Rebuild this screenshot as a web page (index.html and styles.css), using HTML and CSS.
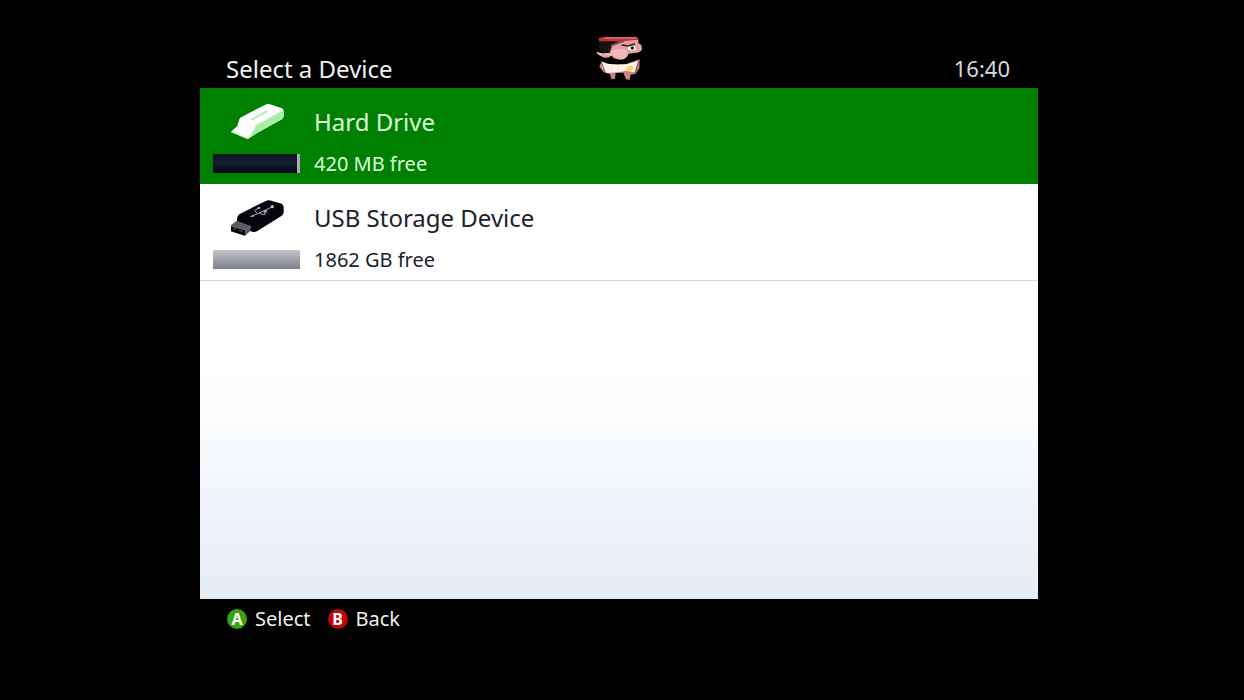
FILE: index.html
```
<!DOCTYPE html>
<html lang="en">
<head>
    <meta charset="UTF-8">
    <meta name="viewport" content="width=device-width, initial-scale=1.0">
    <title>Select a Device</title>
    <link rel="stylesheet" href="styles.css">
</head>
<body>

    <div class="screen">
        <!-- Title bar -->
        <header class="header">
            <h1>Select a Device</h1>
            <svg class="avatar" viewBox="9 6 144 144" aria-hidden="true">
                <!-- Face -->
                <path d="M20 24 L90 22 L136 17 L136 31 Q148 34 147 50 Q142 59 124 60 L107 62 Q103 73 93 79 Q78 82 63 76 L55 68 Q48 75 35 74 Q19 71 10 58 L21 60 L30 63 L50 59 L52 40 Z" fill="#e7a0a3"/>
                <path d="M55 58 Q62 48 72 51 Q86 43 100 52 L105 64 Q98 76 85 77 Q66 76 55 64 Z" fill="#f3b8b7"/>
                <path d="M12 59 Q22 64 33 63 Q48 61 54 67" fill="none" stroke="#ffc5c7" stroke-width="4"/>
                <path d="M102 39 Q112 33 125 40 L130 49 Q120 57 106 50 Z" fill="#fff4ed"/>
                <circle cx="118" cy="45" r="5" fill="#1a1011"/>
                <path d="M86 36 L105 39 L126 32" fill="none" stroke="#33191d" stroke-width="5"/>
                <!-- Bandana and eye patch -->
                <path d="M16 16 Q28 9 58 12 L133 11 L136 20 L96 24 L66 31 L20 28 Z" fill="#b63435"/>
                <path d="M34 15 L130 15" stroke="#df716c" stroke-width="4"/>
                <path d="M20 25 L64 25 L78 26 L57 39 L51 56 Q34 64 22 57 L18 42 Z" fill="#151216"/>
                <path d="M53 38 L93 24" stroke="#765055" stroke-width="5"/>
                <!-- Jaw and teeth -->
                <path d="M25 87 L47 94 L97 94 L140 79 L139 106 L128 122 L113 125 L110 141 L99 139 L91 119 L68 120 L66 137 L55 139 L51 123 L32 118 L19 101 Z" fill="#ce8084"/>
                <path d="M24 85 L44 92 L72 95 L101 94 L137 83 L124 118 L99 113 L80 117 L42 120 L28 105 Z" fill="#fff6eb"/>
                <path d="M101 102 L115 96 L122 105 L113 117 L99 112 Z" fill="#ffd36a"/>
                <path d="M35 92 L51 112 M57 94 L56 116 M77 96 L76 116" stroke="#ead4cd" stroke-width="2"/>
                <path d="M25 86 L35 116 M137 84 L127 120" stroke="#984850" stroke-width="3"/>
            </svg>
            <time class="clock">16:40</time>
        </header>

        <!-- Device list -->
        <main class="panel">
            <button type="button" class="device selected">
                <span class="device-art">
                    <svg class="device-icon" viewBox="14 6 168 120" aria-hidden="true">
                        <path d="M20 101 L39 84 L45 63 Q47 58 53 56 L126 19 Q134 16 141 20 L173 31 Q178 34 178 39 V56 Q176 62 170 65 L98 105 L71 123 Z" fill="#ffffff"/>
                        <path d="M177 35 V56 Q176 62 170 65 L98 105 L71 123 L90 94 Q93 80 102 77 Z" fill="#a8efa6"/>
                        <path d="M103 77 L176 36" stroke="#e7ffe4" stroke-width="3"/>
                        <path d="M78 63 L124 38 Q130 36 132 42 L88 66 Q80 69 78 63 Z" fill="#b9efb4"/>
                        <path d="M20 101 L71 123" stroke="#bff6b8" stroke-width="3"/>
                    </svg>
                    <span class="storage used"></span>
                </span>
                <span class="device-text">
                    <span class="device-name">Hard Drive</span>
                    <span class="device-free">420 MB free</span>
                </span>
            </button>

            <button type="button" class="device">
                <span class="device-art">
                    <svg class="device-icon" viewBox="14 6 168 120" aria-hidden="true">
                        <path d="M38 74 Q39 65 46 60 L124 21 Q132 17 141 20 L172 29 Q178 33 178 40 V56 Q177 62 171 66 L99 111 Q90 117 79 112 L38 94 Z" fill="#05060d"/>
                        <path d="M20 94 L37 80 L80 96 L77 112 L62 125 L20 112 Z" fill="#575a62"/>
                        <path d="M20 95 L62 108 L62 125 L20 112 Z" fill="#08090e"/>
                        <path d="M20 95 L62 108 L80 96" fill="none" stroke="#74777e" stroke-width="3"/>
                        <path d="M26 103 L36 106 M44 109 L55 112" stroke="#41444d" stroke-width="4"/>
                        <!-- USB mark -->
                        <path d="M84 66 L143 39 M99 59 L91 49 L103 42 M105 57 L120 63 L124 51" fill="none" stroke="#a3a7af" stroke-width="3"/>
                        <circle cx="144" cy="38" r="5" fill="#b9bcc3"/>
                        <path d="M76 69 L87 61 L89 68 Z" fill="#a3a7af"/>
                        <circle cx="104" cy="42" r="4" fill="#a3a7af"/>
                        <path d="M119 48 L129 49 L126 57 L117 55 Z" fill="#a3a7af"/>
                    </svg>
                    <span class="storage"></span>
                </span>
                <span class="device-text">
                    <span class="device-name">USB Storage Device</span>
                    <span class="device-free">1862 GB free</span>
                </span>
            </button>
        </main>

        <!-- Controller hints -->
        <footer class="footer">
            <button type="button" class="hint"><span class="key key-a">A</span>Select</button>
            <button type="button" class="hint"><span class="key key-b">B</span>Back</button>
        </footer>
    </div>

</body>
</html>
```

FILE: styles.css
```
/* General Styling */
* {
    box-sizing: border-box;
}

body {
    margin: 0;
    background: #000000;
    color: #f0f0f0;
    font-family: "Noto Sans", "Open Sans", sans-serif;
}

button {
    border: none;
    background: none;
    color: inherit;
    font-family: inherit;
    cursor: pointer;
}

.screen {
    min-height: 100vh;
    padding: 0 206px 0 200px;
    display: flex;
    flex-direction: column;
}

/* Title bar */
.header {
    height: 88px;
    padding: 0 28px 5px 26px;
    display: grid;
    grid-template-columns: 1fr 48px 1fr;
    align-items: end;
}

.header h1 {
    margin: 0;
    font-size: 24px;
    line-height: 28px;
    font-weight: normal;
}

.avatar {
    width: 48px;
    height: 48px;
    justify-self: start;
    margin-left: 2px;
}

.clock {
    font-size: 22px;
    line-height: 30px;
    text-align: right;
    color: #d8d8d8;
}

/* Device list */
.panel {
    flex: 1;
    background: linear-gradient(#ffffff 50%, #fbfdfe 64%, #f0f4fa 80%, #e6ecf3);
}

.device {
    width: 100%;
    height: 97px;
    padding: 12px 13px 10px;
    display: flex;
    gap: 14px;
    border-bottom: 1px solid #d3d6d9;
    color: #20222b;
    text-align: left;
}

.device.selected {
    height: 96px;
    border-bottom: none;
    background: #008000;
    color: #dcffd8;
}

.device-art {
    width: 87px;
    display: flex;
    flex-direction: column;
    align-items: center;
    gap: 14px;
}

.device-icon {
    width: 56px;
    height: 40px;
}

.storage {
    width: 100%;
    height: 19px;
    background: linear-gradient(#c3c4cc, #7d7f8b);
}

.storage.used {
    border-right: 3px solid #a9abb5;
    background: linear-gradient(#071321, #111f31 45%, #020914);
}

.device-text {
    display: flex;
    flex-direction: column;
    gap: 10px;
}

.device-name {
    font-size: 24px;
    line-height: 44px;
}

.device-name,
.device-free {
    white-space: nowrap;
}

.device-free {
    font-size: 20px;
    line-height: 20px;
}

/* Controller hints */
.footer {
    height: 101px;
    padding: 6px 27px;
    display: flex;
    align-items: flex-start;
    gap: 17px;
}

.hint {
    padding: 0;
    display: flex;
    align-items: center;
    gap: 8px;
    font-size: 20px;
    line-height: 28px;
}

.key {
    width: 20px;
    height: 20px;
    border-radius: 50%;
    color: #ffffff;
    font-size: 16px;
    font-weight: bold;
    line-height: 20px;
    text-align: center;
}

.key-a {
    background: #38a30c;
}

.key-b {
    background: #c2050b;
}
```
